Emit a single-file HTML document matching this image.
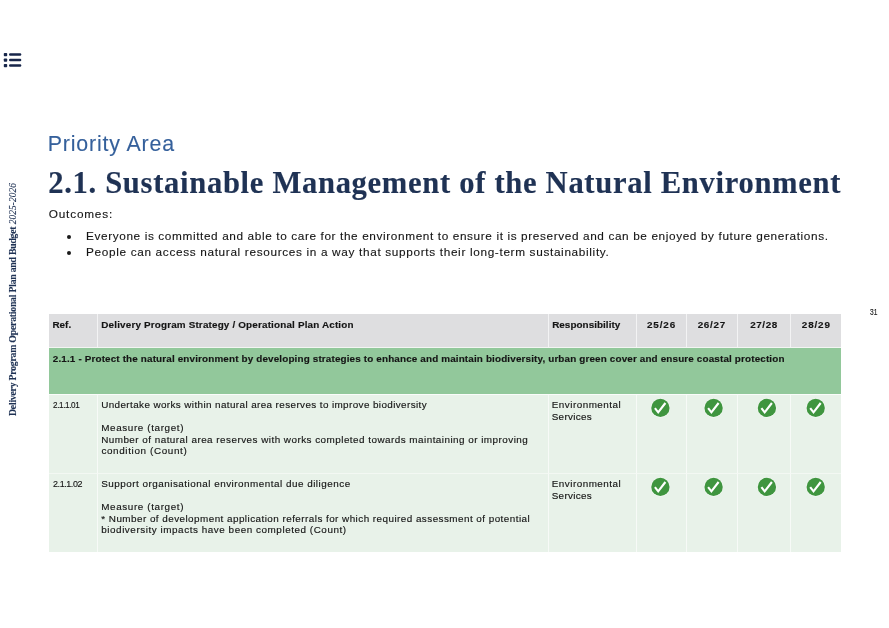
<!DOCTYPE html>
<html lang="en">
<head>
<meta charset="utf-8">
<title>2.1. Sustainable Management of the Natural Environment</title>
<style>
html,body{margin:0;padding:0;background:#fff;}
body{width:889px;height:628px;position:relative;overflow:hidden;font-family:"Liberation Sans", sans-serif;color:#151515;-webkit-text-stroke:0.15px;}
#page{position:absolute;left:0;top:0;width:889px;height:628px;will-change:transform;}
.ln{display:block;white-space:nowrap;transform-origin:0 50%;}
#menu{position:absolute;left:0;top:48px;width:26px;height:24px;}
#side{position:absolute;left:0;top:0;width:0;height:0;}
#side p{-webkit-text-stroke:0.1px;position:absolute;margin:0;left:16.2px;top:416.4px;transform-origin:0 0;transform:rotate(-90deg);white-space:nowrap;font-family:"Liberation Serif", serif;font-weight:bold;font-size:9.8px;line-height:1;color:#1f3254;height:0;}
#side p span{position:relative;top:-7.9px;}
#side i{font-weight:normal;font-size:9.4px;}
h2{-webkit-text-stroke:0.1px;position:absolute;margin:0;left:49px;top:128.7px;font-weight:normal;font-size:21.4px;line-height:30px;color:#35609b;}
h1{-webkit-text-stroke:0.15px;position:absolute;margin:0;left:49px;top:162.7px;font-family:"Liberation Serif", serif;font-weight:bold;font-size:30.6px;line-height:40px;color:#1f3254;}
#out{-webkit-text-stroke:0.12px;position:absolute;margin:0;left:49px;top:206.3px;font-size:11.8px;line-height:16px;}
ul{-webkit-text-stroke:0.12px;position:absolute;margin:0;padding:0;left:87px;top:229.3px;list-style:none;font-size:11.8px;line-height:15.5px;}
ul li{position:relative;height:15.5px;}
ul li::before{content:"";position:absolute;left:-19.7px;top:6px;width:4px;height:4px;border-radius:50%;background:#1a1a1a;}
table{position:absolute;left:49px;top:314px;width:792px;border-collapse:separate;border-spacing:0;table-layout:fixed;font-size:9.9px;line-height:11.45px;}
th,td{padding:0;vertical-align:top;text-align:left;border-right:1px solid #f7faf7;border-bottom:1px solid #f3f8f3;box-sizing:border-box;overflow:hidden;}
th:last-child,td:last-child{border-right:none;}
thead th{background:#dedee0;height:34px;padding:4.8px 0 0 4.4px;font-weight:bold;border-right-color:#f3f3f4;border-bottom-color:#f3f5f3;}
thead th.yr{padding-left:0;text-align:center;}
thead th.yr .ln{display:inline-block;}
tr.grp th{border-bottom-color:#fafcfa;background:#92c89b;height:46.5px;padding:4.6px 0 0 4.4px;font-weight:bold;border-right:none;}
tbody td{background:#e8f2e9;height:79px;padding:4.9px 0 0 4.4px;}
tbody tr:last-child td{border-bottom:none;height:78px;}
td.c{padding:0;position:relative;}
.ck{position:absolute;left:0;top:0;overflow:visible;}
#pg{position:absolute;margin:0;left:869.5px;top:306px;font-size:8.4px;line-height:12px;color:#222;}
.sp{display:block;height:11.45px;}
</style>
</head>
<body>
<div id="page">
<nav id="menu" aria-label="Contents"><svg width="26" height="24" viewBox="0 0 26 24"><g fill="#17264a"><rect x="3.8" y="4.9" width="3.4" height="3.3" rx=".8"/><rect x="3.8" y="10.4" width="3.4" height="3.3" rx=".8"/><rect x="3.8" y="15.9" width="3.4" height="3.3" rx=".8"/><rect x="9" y="5.35" width="12.3" height="2.4" rx="1.2"/><rect x="9" y="10.85" width="12.3" height="2.4" rx="1.2"/><rect x="9" y="16.35" width="12.3" height="2.4" rx="1.2"/></g></svg></nav>
<aside id="side"><p><span id="sidetxt"><b id="sideA" style="letter-spacing:-0.250px;">Delivery Program Operational Plan and Budget</b> <i id="sideB" style="letter-spacing:0.059px;">2025-2026</i></span></p></aside>
<h2><span class="ln" id="pri" style="letter-spacing:0.819px;margin-left:-1.29px;">Priority Area</span></h2>
<h1><span class="ln" id="ttl" style="letter-spacing:0.688px;margin-left:-0.84px;">2.1. Sustainable Management of the Natural Environment</span></h1>
<p id="out"><span class="ln" id="outl" style="letter-spacing:0.793px;margin-left:-0.21px;">Outcomes:</span></p>
<ul>
<li><span class="ln" id="b1" style="letter-spacing:0.616px;margin-left:-0.97px;">Everyone is committed and able to care for the environment to ensure it is preserved and can be enjoyed by future generations.</span></li>
<li><span class="ln" id="b2" style="letter-spacing:0.660px;margin-left:-0.97px;">People can access natural resources in a way that supports their long-term sustainability.</span></li>
</ul>
<table>
<colgroup><col style="width:48.5px"><col style="width:451px"><col style="width:88.5px"><col style="width:49.5px"><col style="width:51px"><col style="width:53px"><col style="width:50.5px"></colgroup>
<thead>
<tr><th><span class="ln" id="th1" style="letter-spacing:0.040px;margin-left:-1.00px;">Ref.</span></th><th><span class="ln" id="th2" style="letter-spacing:0.168px;margin-left:-0.62px;">Delivery Program Strategy / Operational Plan Action</span></th><th><span class="ln" id="th3" style="letter-spacing:0.052px;margin-left:-0.78px;">Responsibility</span></th><th class="yr"><span class="ln" id="y1" style="letter-spacing:0.884px;margin-left:0.58px;">25/26</span></th><th class="yr"><span class="ln" id="y2" style="letter-spacing:0.716px;margin-left:0.57px;">26/27</span></th><th class="yr"><span class="ln" id="y3" style="letter-spacing:0.592px;margin-left:0.97px;">27/28</span></th><th class="yr"><span class="ln" id="y4" style="letter-spacing:0.870px;margin-left:1.13px;">28/29</span></th></tr>
</thead>
<tbody>
<tr class="grp"><th colspan="7"><span class="ln" id="grp" style="letter-spacing:0.150px;margin-left:-0.61px;">2.1.1 - Protect the natural environment by developing strategies to enhance and maintain biodiversity, urban green cover and ensure coastal protection</span></th></tr>
<tr>
<td><span class="ln" id="r1ref" style="letter-spacing:-0.450px;margin-left:-0.74px;transform:scaleX(0.8230);">2.1.1.01</span></td>
<td><span class="ln" id="r1a" style="letter-spacing:0.393px;margin-left:-0.71px;">Undertake works within natural area reserves to improve biodiversity</span><span class="sp"></span><span class="ln" id="r1b" style="letter-spacing:0.621px;margin-left:-0.73px;">Measure (target)</span><span class="ln" id="r1c" style="letter-spacing:0.473px;margin-left:-0.78px;">Number of natural area reserves with works completed towards maintaining or improving</span><span class="ln" id="r1d" style="letter-spacing:0.638px;margin-left:-0.52px;">condition (Count)</span></td>
<td><span class="ln" id="r1e" style="letter-spacing:0.490px;margin-left:-1.16px;">Environmental</span><span class="ln" id="r1f" style="letter-spacing:0.325px;margin-left:-1.23px;">Services</span></td>
<td class="c"><svg class="ck" width="50" height="28" viewBox="0 0 50 28" role="img" aria-label="Yes"><g transform="translate(23.40 12.90)"><circle r="9.75" fill="#fff" opacity=".5"/><circle r="9.15" fill="#3f953f"/><path d="M-5.5 0.3 L-2.2 4.4 L5.0 -4.9" fill="none" stroke="#fff" stroke-width="2.15"/></g></svg></td>
<td class="c"><svg class="ck" width="50" height="28" viewBox="0 0 50 28" role="img" aria-label="Yes"><g transform="translate(26.60 12.90)"><circle r="9.75" fill="#fff" opacity=".5"/><circle r="9.15" fill="#3f953f"/><path d="M-5.5 0.3 L-2.2 4.4 L5.0 -4.9" fill="none" stroke="#fff" stroke-width="2.15"/></g></svg></td>
<td class="c"><svg class="ck" width="50" height="28" viewBox="0 0 50 28" role="img" aria-label="Yes"><g transform="translate(28.90 12.90)"><circle r="9.75" fill="#fff" opacity=".5"/><circle r="9.15" fill="#3f953f"/><path d="M-5.5 0.3 L-2.2 4.4 L5.0 -4.9" fill="none" stroke="#fff" stroke-width="2.15"/></g></svg></td>
<td class="c"><svg class="ck" width="50" height="28" viewBox="0 0 50 28" role="img" aria-label="Yes"><g transform="translate(24.70 12.90)"><circle r="9.75" fill="#fff" opacity=".5"/><circle r="9.15" fill="#3f953f"/><path d="M-5.5 0.3 L-2.2 4.4 L5.0 -4.9" fill="none" stroke="#fff" stroke-width="2.15"/></g></svg></td>
</tr>
<tr>
<td><span class="ln" id="r2ref" style="letter-spacing:-0.450px;margin-left:-0.88px;transform:scaleX(0.9055);">2.1.1.02</span></td>
<td><span class="ln" id="r2a" style="letter-spacing:0.499px;margin-left:-0.76px;">Support organisational environmental due diligence</span><span class="sp"></span><span class="ln" id="r2b" style="letter-spacing:0.621px;margin-left:-0.73px;">Measure (target)</span><span class="ln" id="r2c" style="letter-spacing:0.457px;margin-left:-0.59px;">* Number of development application referrals for which required assessment of potential</span><span class="ln" id="r2d" style="letter-spacing:0.549px;margin-left:-0.64px;">biodiversity impacts have been completed (Count)</span></td>
<td><span class="ln" id="r2e" style="letter-spacing:0.490px;margin-left:-1.16px;">Environmental</span><span class="ln" id="r2f" style="letter-spacing:0.325px;margin-left:-1.23px;">Services</span></td>
<td class="c"><svg class="ck" width="50" height="28" viewBox="0 0 50 28" role="img" aria-label="Yes"><g transform="translate(23.40 12.90)"><circle r="9.75" fill="#fff" opacity=".5"/><circle r="9.15" fill="#3f953f"/><path d="M-5.5 0.3 L-2.2 4.4 L5.0 -4.9" fill="none" stroke="#fff" stroke-width="2.15"/></g></svg></td>
<td class="c"><svg class="ck" width="50" height="28" viewBox="0 0 50 28" role="img" aria-label="Yes"><g transform="translate(26.60 12.90)"><circle r="9.75" fill="#fff" opacity=".5"/><circle r="9.15" fill="#3f953f"/><path d="M-5.5 0.3 L-2.2 4.4 L5.0 -4.9" fill="none" stroke="#fff" stroke-width="2.15"/></g></svg></td>
<td class="c"><svg class="ck" width="50" height="28" viewBox="0 0 50 28" role="img" aria-label="Yes"><g transform="translate(28.90 12.90)"><circle r="9.75" fill="#fff" opacity=".5"/><circle r="9.15" fill="#3f953f"/><path d="M-5.5 0.3 L-2.2 4.4 L5.0 -4.9" fill="none" stroke="#fff" stroke-width="2.15"/></g></svg></td>
<td class="c"><svg class="ck" width="50" height="28" viewBox="0 0 50 28" role="img" aria-label="Yes"><g transform="translate(24.70 12.90)"><circle r="9.75" fill="#fff" opacity=".5"/><circle r="9.15" fill="#3f953f"/><path d="M-5.5 0.3 L-2.2 4.4 L5.0 -4.9" fill="none" stroke="#fff" stroke-width="2.15"/></g></svg></td>
</tr>
</tbody>
</table>
<p id="pg"><span class="ln" id="pgl" style="letter-spacing:0.000px;margin-left:0.33px;transform:scaleX(0.7940);">31</span></p>
</div>
</body>
</html>
